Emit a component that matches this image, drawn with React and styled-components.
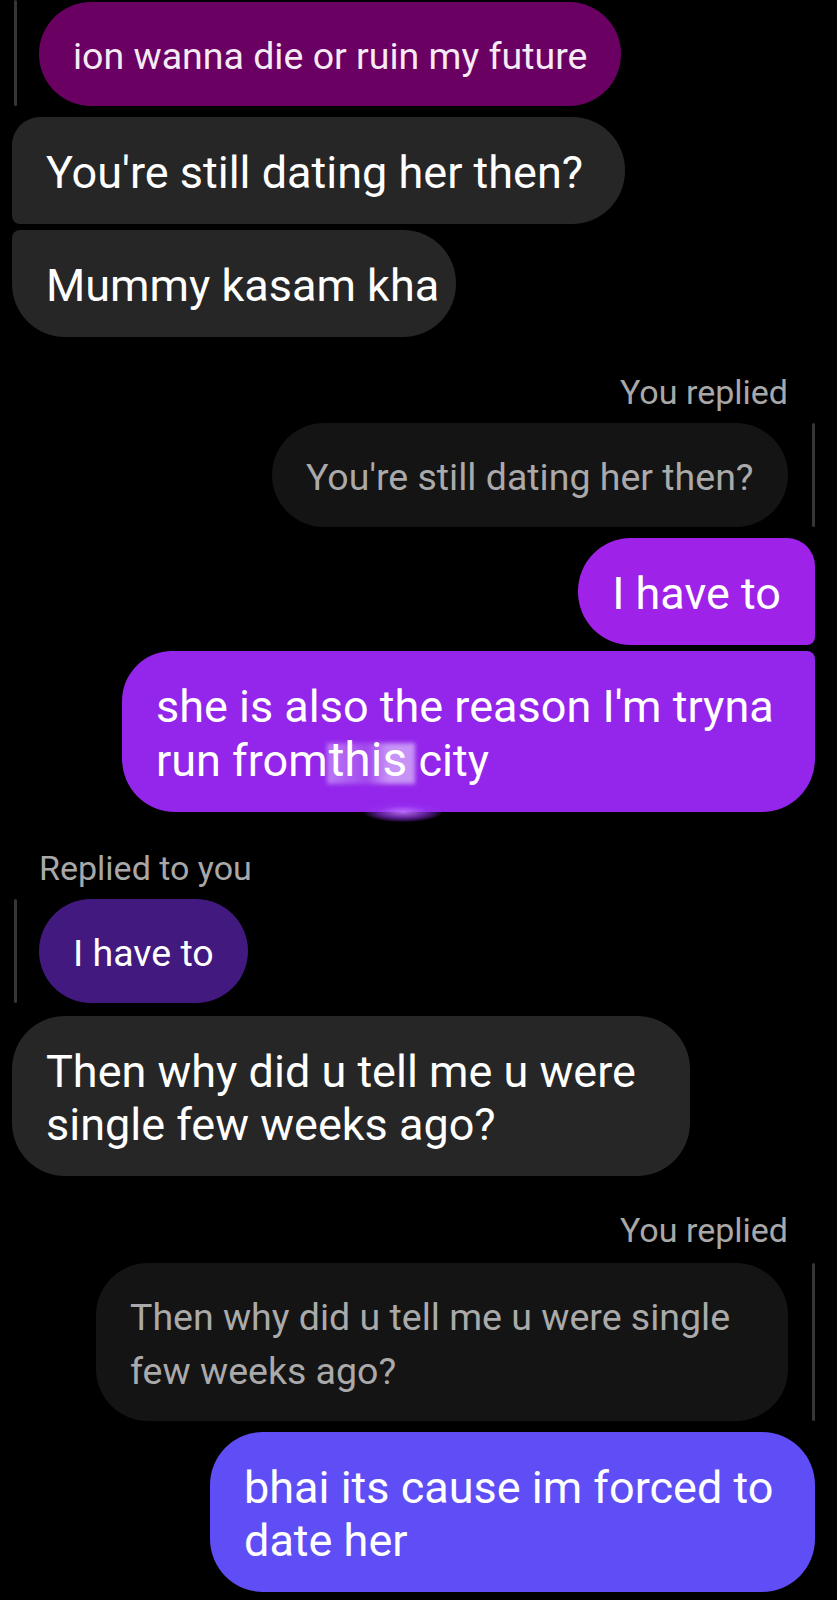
import styled, { createGlobalStyle } from "styled-components";

const GlobalStyle = createGlobalStyle`
  html, body {
    margin: 0;
    padding: 0;
    background: #000;
  }
  body {
    font-family: Roboto, "Noto Sans", "Liberation Sans", sans-serif;
    -webkit-font-smoothing: antialiased;
  }
`;

// ---------- layout ----------

const Thread = styled.div`
  display: flex;
  flex-direction: column;
  box-sizing: border-box;
  width: 837px;
  min-height: 1600px;
  padding: 0 22px 0 12px;
  background: #000;
  overflow: hidden;
`;

const Label = styled.div`
  align-self: ${(p) => (p.$mine ? "flex-end" : "flex-start")};
  margin-top: ${(p) => p.$mt || 0}px;
  padding: 0 27px;
  font-size: 34px;
  line-height: 40px;
  color: #a8a8a8;
`;

const ReplyRow = styled.div`
  display: flex;
  flex-direction: ${(p) => (p.$mine ? "row-reverse" : "row")};
  align-items: stretch;
  align-self: ${(p) => (p.$mine ? "flex-end" : "flex-start")};
  gap: ${(p) => (p.$mine ? 24 : 22)}px;
  margin-top: ${(p) => p.$mt || 0}px;
  padding-left: ${(p) => (p.$mine ? 0 : 2)}px;
`;

const ReplyBar = styled.span`
  flex: none;
  width: 3px;
  border-radius: 2px;
  background: #363636;
`;

const Quote = styled.div`
  box-sizing: border-box;
  width: ${(p) => (p.$w ? `${p.$w}px` : "fit-content")};
  margin-top: ${(p) => p.$mt || 0}px;
  padding: 27px 34px 23px;
  font-size: 37.5px;
  line-height: 54px;
  white-space: nowrap;
  color: ${(p) => p.$color || "#fff"};
  background: ${(p) => p.$bg};
  border-radius: 52px;
`;

const Bubble = styled.div`
  position: relative;
  box-sizing: border-box;
  width: ${(p) => (p.$w ? `${p.$w}px` : "fit-content")};
  align-self: ${(p) => (p.$mine ? "flex-end" : "flex-start")};
  margin-top: ${(p) => p.$mt || 0}px;
  padding: 29px 34px 25px;
  font-size: 45px;
  line-height: 53px;
  white-space: nowrap;
  color: #fff;
  background: ${(p) => p.$bg || "#262626"};
  border-radius: ${(p) => p.$radius || "53px"};
`;

// the smudged word left over from the edit in the screenshot
const Smudge = styled.span`
  position: relative;
  z-index: 0;
  margin-left: 1px;
  font-size: 48px;

  &::before {
    content: "";
    position: absolute;
    z-index: -1;
    left: -2px;
    right: -8px;
    top: 12px;
    bottom: 4px;
    background: linear-gradient(
      90deg,
      rgba(225, 205, 255, 0.5) 0%,
      rgba(225, 205, 255, 0.2) 45%,
      rgba(235, 220, 255, 0.6) 70%,
      rgba(235, 220, 255, 0.6) 100%
    );
    filter: blur(2px);
  }
`;

const Glow = styled.span`
  position: absolute;
  left: 242px;
  bottom: -10px;
  width: 78px;
  height: 20px;
  border-radius: 50%;
  background: radial-gradient(
    ellipse at center,
    rgba(190, 110, 255, 0.95) 0%,
    rgba(150, 50, 240, 0.6) 45%,
    rgba(150, 50, 240, 0) 75%
  );
  z-index: -1;
`;

const Lines = ({ lines }) =>
  lines.map((l, i) => (
    <span key={i}>
      {i > 0 && <br />}
      {l}
    </span>
  ));

export default function App() {
  return (
    <>
      <GlobalStyle />
      <Thread>
        <ReplyRow $mt={0}>
          <ReplyBar />
          <Quote $mt={2} $bg="#6a0062" $color="#f6eaf5">
            ion wanna die or ruin my future
          </Quote>
        </ReplyRow>

        <Bubble $mt={11} $w={613} $radius="28px 53px 53px 8px">
          You're still dating her then?
        </Bubble>
        <Bubble $mt={6} $w={444} $radius="8px 53px 53px 53px">
          Mummy kasam kha
        </Bubble>

        <Label $mine $mt={35}>You replied</Label>
        <ReplyRow $mine $mt={11}>
          <ReplyBar />
          <Quote $bg="#141414" $color="#aaa" $w={516}>
            You're still dating her then?
          </Quote>
        </ReplyRow>

        <Bubble $mine $mt={11} $bg="#9e22e8" $radius="53px 28px 8px 53px">
          I have to
        </Bubble>
        <Bubble $mine $mt={6} $w={693} $bg="#9326ea" $radius="50px 8px 53px 53px" style={{ zIndex: 0 }}>
          she is also the reason I'm tryna
          <br />
          run from<Smudge>this</Smudge> city
          <Glow />
        </Bubble>

        <Label $mt={36}>Replied to you</Label>
        <ReplyRow $mt={11}>
          <ReplyBar />
          <Quote $bg="#41197f">I have to</Quote>
        </ReplyRow>

        <Bubble $mt={13} $w={678}>
          <Lines lines={["Then why did u tell me u were", "single few weeks ago?"]} />
        </Bubble>

        <Label $mine $mt={34}>You replied</Label>
        <ReplyRow $mine $mt={13}>
          <ReplyBar />
          <Quote $bg="#141414" $color="#aaa" $w={692}>
            <Lines lines={["Then why did u tell me u were single", "few weeks ago?"]} />
          </Quote>
        </ReplyRow>

        <Bubble $mine $mt={11} $w={605} $bg="#5f4ef6">
          <Lines lines={["bhai its cause im forced to", "date her"]} />
        </Bubble>
      </Thread>
    </>
  );
}
